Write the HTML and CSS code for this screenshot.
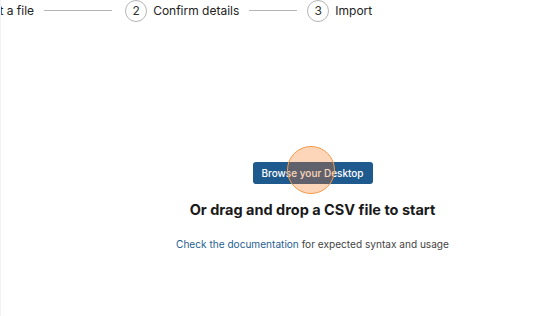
FILE: index.html
```html
<!DOCTYPE html>
<html lang="en">
<head>
  <meta charset="UTF-8">
  <title>Import CSV</title>
  <link rel="stylesheet" href="styles.css">
</head>
<body>
  <div class="stepper">
    <div class="step">
      <span class="step-num">1</span>
      <span class="step-label">Select a file</span>
    </div>
    <div class="step-line first"></div>
    <div class="step">
      <span class="step-num">2</span>
      <span class="step-label">Confirm details</span>
    </div>
    <div class="step-line second"></div>
    <div class="step">
      <span class="step-num">3</span>
      <span class="step-label">Import</span>
    </div>
  </div>

  <div class="dropzone">
    <div class="browse-wrap">
      <button class="browse-btn">Browse your Desktop</button>
      <span class="click-mark"></span>
    </div>
    <h2 class="drop-title">Or drag and drop a CSV file to start</h2>
    <p class="drop-help"><a href="#">Check the documentation</a> for expected syntax and usage</p>
  </div>
</body>
</html>
```

FILE: styles.css
```css
body {
  margin: 0;
  font-family: Inter, "Liberation Sans", sans-serif;
  background-color: #fff;
  color: #1b1b1b;
  border-left: 1px solid #f2f2f2;
  height: 316px;
  box-sizing: border-box;
  overflow: hidden;
}

/* steps across the top */
.stepper {
  display: flex;
  align-items: center;
  height: 21px;
  margin-left: -61px;
  font-size: 12px;
  white-space: nowrap;
}

.step {
  display: flex;
  align-items: center;
  gap: 6px;
}

.step-num {
  display: flex;
  align-items: center;
  justify-content: center;
  width: 20px;
  height: 20px;
  border: 1px solid #b5b5b5;
  border-radius: 50%;
  font-size: 12px;
  color: #333;
}

.step-label {
  color: #222;
}

.step-line {
  height: 1px;
  background-color: #b5b5b5;
}

.step-line.first {
  width: 68px;
  margin: 0 13px 0 10px;
}

.step-line.second {
  width: 48px;
  margin: 0 10px 0 10px;
}

/* drop area */
.dropzone {
  display: flex;
  flex-direction: column;
  align-items: center;
  padding: 141px 0 0 82px;
}

.browse-wrap {
  position: relative;
}

.browse-btn {
  display: block;
  width: 120px;
  height: 22px;
  border: none;
  border-radius: 3px;
  background-color: #1f5a8f;
  color: #fff;
  font-family: inherit;
  font-size: 10px;
  font-weight: 500;
  padding: 0;
  cursor: pointer;
}

.click-mark {
  position: absolute;
  left: 34px;
  top: -16px;
  width: 46px;
  height: 46px;
  border: 1px solid #f39a4a;
  border-radius: 50%;
  background-color: rgba(249, 115, 22, 0.3);
  pointer-events: none;
}

.drop-title {
  margin: 16px 0 0;
  font-size: 14.5px;
  line-height: 20px;
  font-weight: 700;
  color: #1a1a1a;
}

.drop-help {
  margin: 16px 0 0;
  font-size: 10.1px;
  line-height: 16px;
  color: #444;
}

.drop-help a {
  color: #2a5f92;
  text-decoration: none;
}
```
